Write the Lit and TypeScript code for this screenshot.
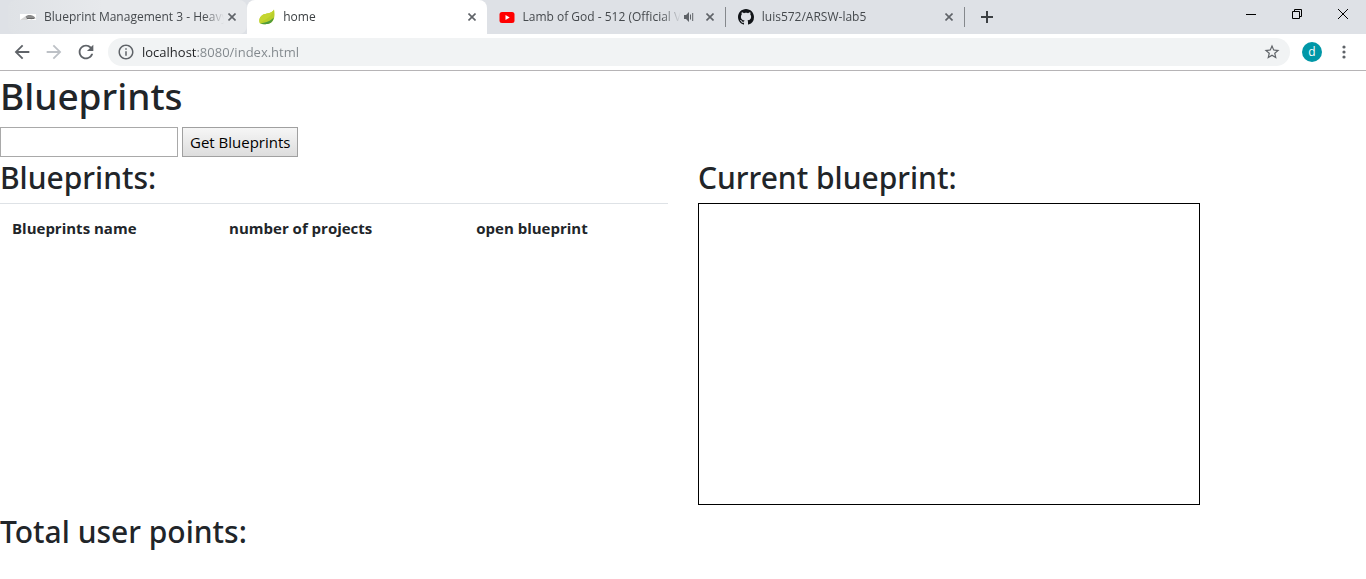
import { LitElement, html, css, svg } from "lit";
import { customElement, property } from "lit/decorators.js";
import { classMap } from "lit/directives/class-map.js";

type Tab = { title: string; icon: string; state?: string; audio?: boolean; divided?: boolean };

const TABS: Tab[] = [
  { title: "Blueprint Management 3 - Heavy", icon: "sketch", state: "hover" },
  { title: "home", icon: "leaf", state: "active" },
  { title: "Lamb of God - 512 (Official V", icon: "video", audio: true, divided: true },
  { title: "luis572/ARSW-lab5", icon: "github", divided: true },
];

const favicons: Record<string, unknown> = {
  sketch: svg`<path d="M0 5h16v6H0z" fill="#fff"/><path d="M0 11l5-3.500 4 1.500-2 2z" fill="#d5d5d5"/><path d="M5.500 7.500c1-1.500 4-2 6-1.200 2 .7 3.500 1.500 4 3.200l-4 .8-5-.8z" fill="#8b8b8b"/><path d="M7 9.500h7" stroke="#666"/>`,
  leaf: svg`<path d="M15 .5C16 5 16.500 15 7.500 15 5 15.500 2.500 15 1 14.500-.5 12 .2 8 3.500 6 7 4 12.500 5 15 .5z" fill="#b9cf2a"/><path d="M15 .5c-2.500 4.500-8 3.500-11.500 5.500C.8 7.700-.2 11 .8 13.800 4 11.500 12 9.500 15 .5z" fill="#c5d630"/><path d="M1.500 14.200C8 13.500 12 11.500 14.800 8.500c-.8 4-3.200 6.500-7.300 6.500-2.500.5-4.500 0-6-.8z" fill="#4f9a3c"/>`,
  video: svg`<rect x=".5" y="3" width="15" height="11" rx="2.500" fill="#f00"/><path d="M6.500 6v5l4.200-2.500z" fill="#fff"/>`,
  github: svg`<path fill="#111418" d="M8 0C3.580 0 0 3.580 0 8c0 3.540 2.290 6.530 5.470 7.590.4.070.550-.170.550-.380 0-.190-.010-.820-.010-1.490-2.010.370-2.530-.490-2.690-.940-.090-.230-.480-.940-.820-1.130-.280-.150-.680-.520-.010-.530.630-.010 1.080.580 1.230.820.720 1.210 1.870.870 2.330.660.070-.520.280-.870.510-1.070-1.780-.200-3.640-.890-3.640-3.950 0-.870.310-1.590.820-2.150-.080-.200-.360-1.020.080-2.120 0 0 .670-.210 2.200.820.640-.180 1.320-.270 2-.270s1.360.090 2 .270c1.530-1.040 2.200-.820 2.200-.820.440 1.100.160 1.920.080 2.120.510.560.820 1.270.820 2.150 0 3.070-1.870 3.750-3.650 3.950.290.250.540.730.540 1.480 0 1.070-.010 1.930-.010 2.200 0 .210.150.460.550.380A8.010 8.010 0 0 0 16 8c0-4.420-3.580-8-8-8z"/>`,
};

const icons = {
  back: svg`<path d="M20 11H7.830l5.590-5.590L12 4l-8 8 8 8 1.410-1.410L7.830 13H20z"/>`,
  forward: svg`<path d="M12 4l-1.410 1.410L16.170 11H4v2h12.170l-5.580 5.590L12 20l8-8z"/>`,
  reload: svg`<path d="M17.650 6.350C16.200 4.900 14.210 4 12 4c-4.420 0-7.990 3.580-7.990 8s3.570 8 7.990 8c3.730 0 6.840-2.550 7.730-6h-2.080c-.820 2.330-3.040 4-5.650 4-3.310 0-6-2.690-6-6s2.690-6 6-6c1.660 0 3.140.690 4.220 1.780L13 11h7V4z"/>`,
  info: svg`<path d="M11 17h2v-6h-2v6zm1-15C6.480 2 2 6.480 2 12s4.480 10 10 10 10-4.480 10-10S17.520 2 12 2zm0 18c-4.410 0-8-3.590-8-8s3.590-8 8-8 8 3.590 8 8-3.590 8-8 8zM11 9h2V7h-2z"/>`,
  star: svg`<path d="M22 9.240l-7.190-.620L12 2 9.190 8.630 2 9.240l5.460 4.730L5.820 21 12 17.270 18.180 21l-1.630-7.030zM12 15.400l-3.760 2.270 1-4.280-3.320-2.880 4.380-.380L12 6.100l1.710 4.040 4.380.380-3.320 2.880 1 4.280z"/>`,
};

const reset = css`
  :host { display: block; font-family: "Open Sans", "Noto Sans", sans-serif; }
  * { box-sizing: border-box; }
  svg { display: block; }
`;

const bareButton = css`
  .bare {
    display: flex; align-items: center; justify-content: center;
    flex: none; padding: 0; border: 0; background: none; color: inherit;
  }
`;

@customElement("browser-tab")
export class BrowserTab extends LitElement {
  static styles = [reset, bareButton, css`
    :host { flex: 1 1 0; min-width: 0; }
    .wrap { display: flex; align-items: center; }
    .tab {
      display: flex; flex: 1; min-width: 0; align-items: center; height: 34px; padding: 0 7px 0 12px;
      border-radius: 8px 8px 0 0; color: #45494d;
    }
    .hover { background: linear-gradient(90deg, #dfe2e6, #e7e9ec 40%); border-radius: 8px; }
    .active { background: #fff; color: #3c4043; }
    .divider { flex: none; width: 1px; height: 20px; background: #85888c; }
    .title {
      flex: 1; min-width: 0; margin-left: 8px; overflow: hidden; white-space: nowrap;
      font-size: 12px; line-height: 18px;
      -webkit-mask-image: linear-gradient(90deg, #000 calc(100% - 20px), transparent);
      mask-image: linear-gradient(90deg, #000 calc(100% - 20px), transparent);
    }
    .icon { flex: none; }
    .audio { flex: none; margin-left: 2px; }
    .close { width: 16px; height: 16px; color: #5f6368; }
    .audio + .close { margin-left: 7px; }
  `];

  @property({ attribute: false }) tab!: Tab;

  render() {
    const t = this.tab;
    return html`
      <div class="wrap">
        <div class=${classMap({ tab: true, hover: t.state === "hover", active: t.state === "active" })}>
          <svg class="icon" width="16" height="16" viewBox="0 0 16 16">${favicons[t.icon]}</svg>
          <span class="title">${t.title}</span>
          ${t.audio
            ? html`<svg class="audio" width="12" height="12" viewBox="0 0 12 12" fill="#5f6368"><path d="M1 4h2l3-3v10L3 8H1z"/><path d="M7.500 3.500v5M9.700 2v8" stroke="#5f6368"/></svg>`
            : ""}
          <button class="bare close" aria-label="Close tab">
            <svg width="8" height="8" viewBox="0 0 8 8" stroke="currentColor" stroke-width="1.600"><path d="M.5.5l7 7M7.500.5l-7 7"/></svg>
          </button>
        </div>
        ${t.divided ? html`<span class="divider"></span>` : ""}
      </div>`;
  }
}

@customElement("browser-chrome")
export class BrowserChrome extends LitElement {
  static styles = [reset, bareButton, css`
    .strip { display: flex; height: 34px; padding-left: 8px; background: #dee1e6; }
    .tabs { display: flex; flex: 1; min-width: 0; max-width: 957px; }
    .new { width: 44px; color: #3c4043; }
    .controls { display: flex; margin-left: auto; color: #000; }
    .control { width: 46px; height: 28px; }
    .toolbar {
      display: flex; align-items: center; height: 37px; padding: 0 12px 0 11px;
      background: #fff; border-bottom: 1px solid #b6b4b6; color: #5f6368;
    }
    .nav { width: 22px; height: 28px; margin-right: 10px; }
    .off { color: #bdc1c6; }
    .address {
      display: flex; flex: 1; align-items: center; min-width: 0; height: 28px; margin-left: 1px;
      padding: 0 9px; border-radius: 14px; background: #f1f3f4;
    }
    .url {
      flex: 1; min-width: 0; height: 24px; margin-left: 7px; padding: 0; border: 0; outline: 0;
      font: 13px/24px "Open Sans", "Noto Sans", sans-serif; color: transparent;
      background: linear-gradient(90deg, #202124 55px, #80868b 55px);
      -webkit-background-clip: text; background-clip: text;
    }
    .avatar {
      width: 20px; height: 20px; margin: 0 12px; border-radius: 50%;
      background: #0097a7; color: #fff; font: 12px/20px "Open Sans", "Noto Sans", sans-serif;
    }
    .menu { width: 20px; height: 28px; }
  `];

  render() {
    return html`
      <div class="strip">
        <div class="tabs">${TABS.map((t) => html`<browser-tab .tab=${t}></browser-tab>`)}</div>
        <button class="bare new" aria-label="New tab">
          <svg width="12" height="12" viewBox="0 0 12 12" stroke="currentColor" stroke-width="2"><path d="M6 0v12M0 6h12"/></svg>
        </button>
        <div class="controls">
          <button class="bare control" aria-label="Minimize"><svg width="10" height="10" viewBox="0 0 10 10" stroke="currentColor"><path d="M0 5.500h10"/></svg></button>
          <button class="bare control" aria-label="Restore"><svg width="10" height="10" viewBox="0 0 10 10" stroke="currentColor" fill="none"><path d="M.5 2.500h7v7h-7zM2.500 2.500v-2h7v7h-2"/></svg></button>
          <button class="bare control" aria-label="Close"><svg width="10" height="10" viewBox="0 0 10 10" stroke="currentColor"><path d="M0 0l10 10M10 0L0 10"/></svg></button>
        </div>
      </div>
      <div class="toolbar">
        <button class="bare nav" aria-label="Back"><svg width="22" height="22" viewBox="0 0 24 24" fill="currentColor">${icons.back}</svg></button>
        <button class="bare nav off" aria-label="Forward" disabled><svg width="22" height="22" viewBox="0 0 24 24" fill="currentColor">${icons.forward}</svg></button>
        <button class="bare nav" aria-label="Reload"><svg width="22" height="22" viewBox="0 0 24 24" fill="currentColor">${icons.reload}</svg></button>
        <div class="address">
          <svg width="18" height="18" viewBox="0 0 24 24" fill="currentColor">${icons.info}</svg>
          <input class="url" aria-label="Address" .value=${"localhost:8080/index.html"} />
          <button class="bare" aria-label="Bookmark this page"><svg width="18" height="18" viewBox="0 0 24 24" fill="currentColor">${icons.star}</svg></button>
        </div>
        <button class="bare avatar" aria-label="Profile">d</button>
        <button class="bare menu" aria-label="Menu"><svg width="4" height="14" viewBox="0 0 4 14" fill="currentColor"><circle cx="2" cy="2" r="1.600"/><circle cx="2" cy="7" r="1.600"/><circle cx="2" cy="12" r="1.600"/></svg></button>
      </div>`;
  }
}

@customElement("app-root")
export class AppRoot extends LitElement {
  static styles = [reset, css`
    :host { min-height: 100vh; background: #fff; color: #212529; font-size: 15px; line-height: 24px; }
    h1, h2 { margin: 0; font-family: "Noto Sans", "Open Sans", sans-serif; font-weight: 500; }
    h1 { margin-bottom: 6px; font-size: 37px; line-height: 50px; }
    h2 { margin-bottom: 4px; font-size: 30px; line-height: 42px; }
    .search { display: flex; gap: 4px; }
    .author { width: 178px; height: 30px; padding: 1px 2px; border: 1px solid #a9a9a9; background: #fff; font: inherit; }
    .get {
      height: 30px; padding: 0 7px; border: 1px solid #a0a0a0; border-radius: 0;
      background: linear-gradient(#f6f6f6, #dddddd); color: #000; font: inherit;
    }
    .row { display: grid; grid-template-columns: 1fr 1fr; gap: 30px; }
    table { width: 100%; border-collapse: collapse; }
    th { padding: 12px; border-top: 1px solid #dee2e6; text-align: left; font-weight: 700; }
    .name { width: 32.5%; }
    .count { width: 37%; }
    canvas { display: block; max-width: 100%; margin-bottom: 6px; border: 1px solid #000; box-sizing: content-box; }
  `];

  render() {
    return html`
      <browser-chrome></browser-chrome>
      <main>
        <h1>Blueprints</h1>
        <div class="search">
          <input class="author" type="text" aria-label="Author" />
          <button class="get">Get Blueprints</button>
        </div>
        <div class="row">
          <section>
            <h2>Blueprints:</h2>
            <table>
              <thead><tr><th class="name" scope="col">Blueprints name</th><th class="count" scope="col">number of projects</th><th scope="col">open blueprint</th></tr></thead>
            </table>
          </section>
          <section>
            <h2>Current blueprint:</h2>
            <canvas width="500" height="300" aria-label="Current blueprint"></canvas>
          </section>
        </div>
        <h2>Total user points:</h2>
      </main>`;
  }
}
